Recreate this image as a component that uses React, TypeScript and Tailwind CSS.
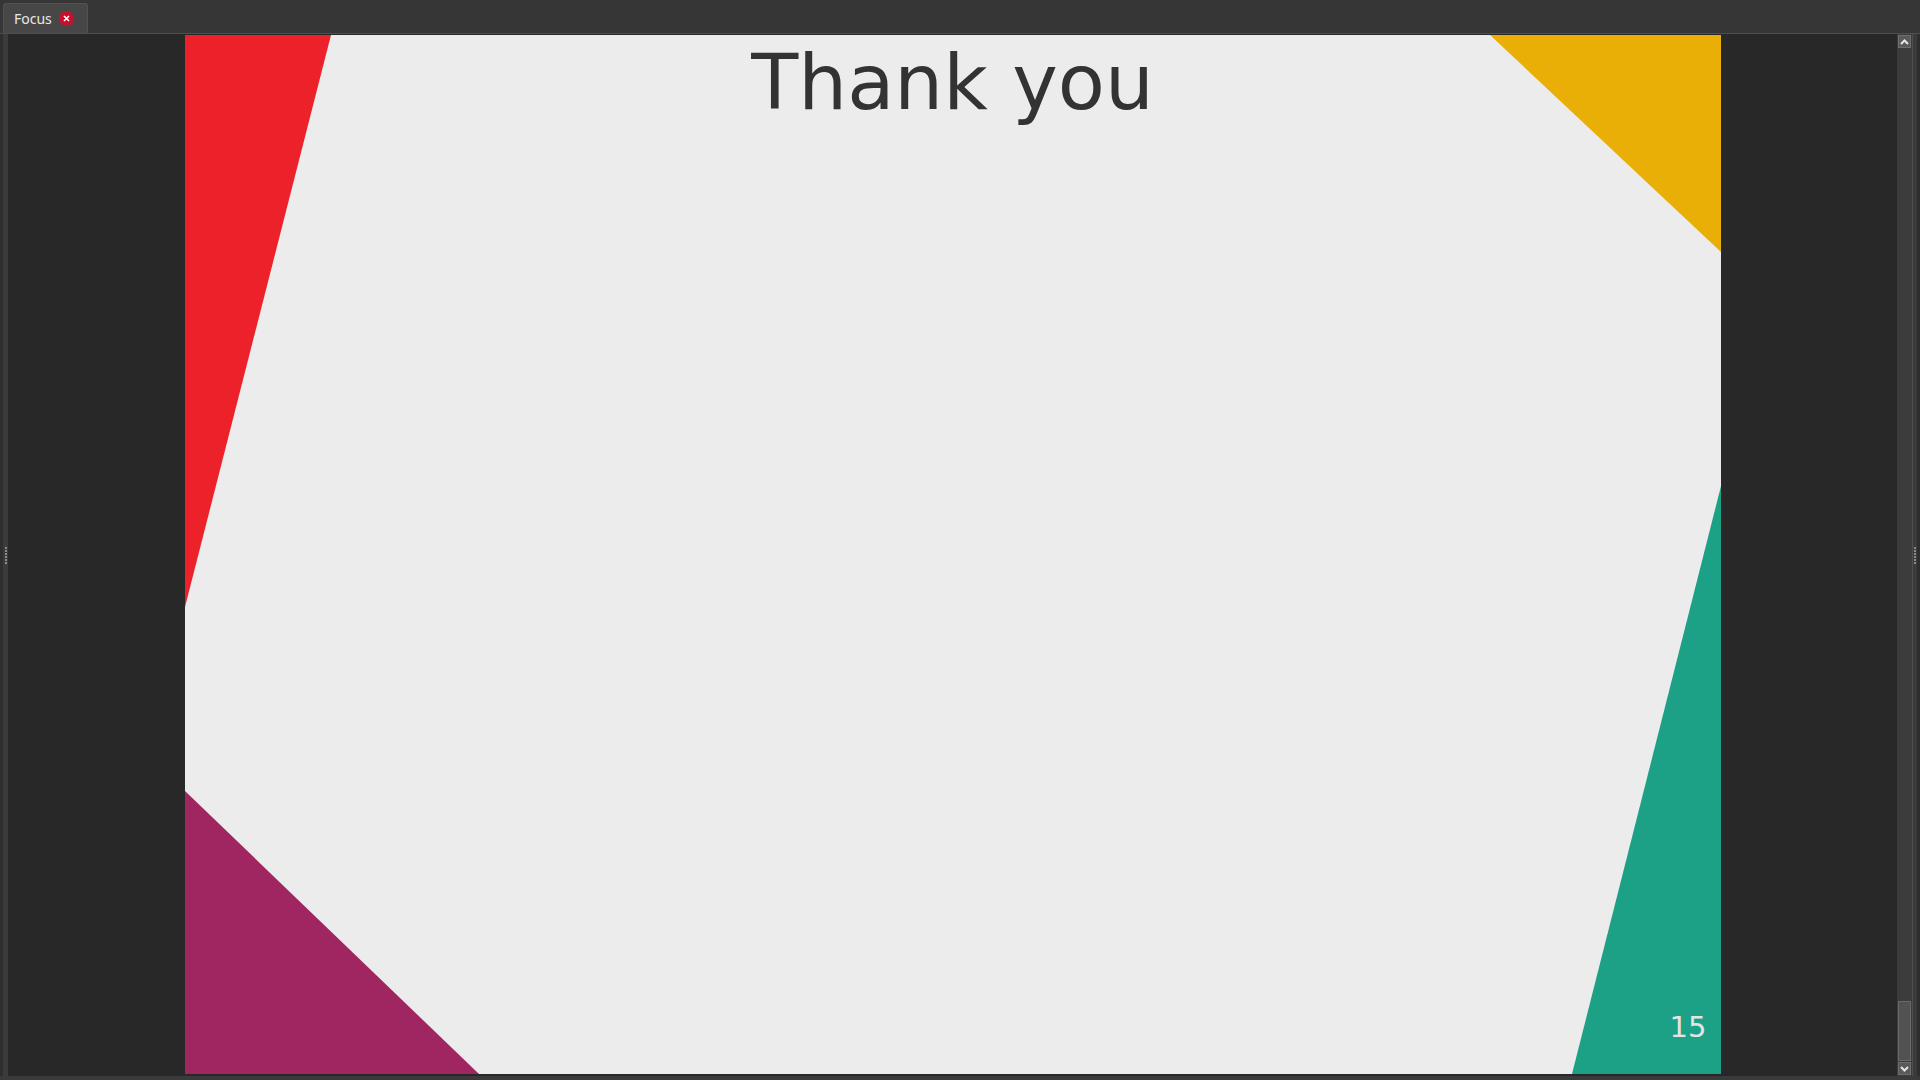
import React from "react";

function Dots() {
  return (
    <div className="flex flex-col gap-[1px]">
      {[0, 1, 2, 3, 4, 5].map((i) => (
        <div key={i} className="w-[2px] h-[2px] bg-[#8a8a8a]" />
      ))}
    </div>
  );
}

function Chevron({ up }: { up: boolean }) {
  return (
    <svg width="9" height="6" viewBox="0 0 9 6">
      <path
        d={up ? "M1 5 L4.5 1.5 L8 5" : "M1 1 L4.5 4.5 L8 1"}
        fill="none"
        stroke="#e6e6e6"
        strokeWidth="2"
      />
    </svg>
  );
}

export default function App() {
  return (
    <div
      className="w-[1920px] h-[1080px] bg-[#363636] flex flex-col overflow-hidden"
      style={{ fontFamily: "'Noto Sans', sans-serif" }}
    >
      {/* tab bar */}
      <div className="h-[33px] bg-[#363636] flex items-end pl-[3px]">
        <div className="w-[85px] h-[30px] bg-[#474747] rounded-t-[3px] border border-b-0 border-[#525252] flex items-center pl-[10px]">
          <span className="text-[14px] text-[#e8e8e8] leading-none">Focus</span>
          <span className="ml-[7px] w-[15px] h-[15px] rounded-full bg-[#c8102e] flex items-center justify-center">
            <svg width="7" height="7" viewBox="0 0 7 7">
              <path d="M1 1 L6 6 M6 1 L1 6" stroke="#fff" strokeWidth="1.6" />
            </svg>
          </span>
        </div>
      </div>
      <div className="h-[1px] bg-[#4e4e4e]" />
      {/* content row */}
      <div className="flex-1 flex min-h-0">
        <div className="w-[3px] bg-[#2e2e2e]" />
        <div className="w-[5px] bg-[#3b3b3b] flex items-center justify-center">
          <Dots />
        </div>
        <div className="flex-1 bg-[#282828] flex justify-center pt-[1px] overflow-hidden">
          <div className="relative w-[1536px] h-[1039px] bg-[#ececec] flex flex-col shrink-0">
            <svg
              className="absolute inset-0"
              width="1536"
              height="1039"
              viewBox="0 0 1536 1039"
            >
              <polygon points="0,0 146,0 0,572" fill="#ed2129" />
              <polygon points="1305,0 1536,0 1536,217" fill="#eaaf06" />
              <polygon points="1536,451 1536,1039 1387,1039" fill="#1ca086" />
              <polygon points="0,756 0,1039 294,1039" fill="#a02661" />
            </svg>
            <div
              className="relative text-center text-[77px] leading-[90px] text-[#333333] mt-[3px]"
              style={{ fontFamily: "'DejaVu Sans', sans-serif" }}
            >
              Thank you
            </div>
            <div className="flex-1" />
            <div
              className="relative self-end text-[29px] leading-[34px] text-[#e4e4e4] pr-[14px] pb-[30px]"
              style={{ fontFamily: "'DejaVu Sans', sans-serif" }}
            >
              15
            </div>
          </div>
        </div>
        {/* scrollbar */}
        <div className="w-[15px] bg-[#3c3c3c] flex flex-col items-center pt-[1px] pb-[1px]">
          <div className="w-[13px] h-[13px] bg-[#5a5a5a] border border-[#6e6e6e] flex items-center justify-center">
            <Chevron up />
          </div>
          <div className="flex-1" />
          <div className="w-[13px] h-[60px] bg-[#525252] border border-[#6a6a6a]" />
          <div className="w-[13px] h-[13px] mt-[1px] bg-[#5a5a5a] border border-[#6e6e6e] flex items-center justify-center">
            <Chevron up={false} />
          </div>
        </div>
        <div className="w-[1px] bg-[#4e4e4e]" />
        <div className="w-[4px] bg-[#3b3b3b] flex items-center justify-center">
          <Dots />
        </div>
        <div className="w-[3px] bg-[#2e2e2e]" />
      </div>
      <div className="h-[4px] bg-[#3a3a3a]" />
    </div>
  );
}
